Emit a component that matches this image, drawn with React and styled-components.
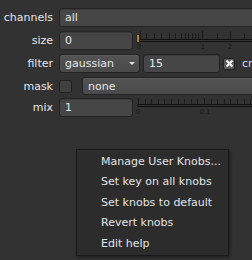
import React from 'react';
import styled, { createGlobalStyle } from 'styled-components';

const GlobalStyle = createGlobalStyle`
  html, body {
    margin: 0;
    padding: 0;
    background: #323232;
    overflow: hidden;
  }
  body {
    font-family: "DejaVu Sans", Verdana, sans-serif;
    font-size: 11px;
    color: #e2e2e2;
  }
`;

const Page = styled.div`
  position: relative;
  width: 252px;
  height: 260px;
  overflow: hidden;
`;

const Panel = styled.div`
  display: flex;
  flex-direction: column;
  gap: 4px;
  padding-top: 8px;
`;

const Row = styled.div`
  display: grid;
  grid-template-columns: 53px 1fr;
  column-gap: 6px;
  align-items: center;
  height: ${(p) => p.h || 19}px;
`;

const Label = styled.div`
  text-align: right;
  color: #e4e6ea;
  white-space: nowrap;
`;

const Controls = styled.div`
  display: flex;
  align-items: center;
  gap: ${(p) => p.gap || 2}px;
  height: 100%;
  min-width: 0;
`;

const Field = styled.div`
  box-sizing: border-box;
  flex: none;
  width: ${(p) => p.w}px;
  height: ${(p) => p.h || 19}px;
  display: flex;
  align-items: center;
  padding-left: 5px;
  background: #464646;
  border: 1px solid #232323;
  border-radius: 3px;
  box-shadow: inset 0 1px 0 #3a3a3a;
  color: #e8e8e8;
  white-space: nowrap;
`;

const Dropdown = styled(Field)`
  position: relative;
  background: linear-gradient(#535353, #4a4a4a);
  box-shadow: inset 0 1px 0 #5c5c5c;
  justify-content: space-between;
  padding-right: 4px;
`;

const Arrow = styled.span`
  width: 0;
  height: 0;
  border-left: 3px solid transparent;
  border-right: 3px solid transparent;
  border-top: 3px solid #e0e0e0;
`;

const Check = styled.div`
  box-sizing: border-box;
  flex: none;
  width: ${(p) => p.size || 13}px;
  height: ${(p) => p.size || 13}px;
  background: ${(p) => (p.checked ? '#5a5a5a' : '#404040')};
  border: 1px solid #222;
  border-radius: 2px;
  display: flex;
  align-items: center;
  justify-content: center;
`;

const CheckText = styled.span`
  color: #c6dcf0;
  margin-left: 4px;
  white-space: nowrap;
`;

const Menu = styled.div`
  position: absolute;
  left: 76px;
  top: 149px;
  width: 153px;
  box-sizing: border-box;
  padding: 2px 0 1px;
  background: #2c2c2c;
  border: 1px solid #1b1b1b;
  box-shadow: 1px 1px 3px rgba(0, 0, 0, 0.45);
`;

const MenuItem = styled.div`
  height: 20.4px;
  line-height: 20.4px;
  padding-left: 24px;
  color: #e2e4e8;
  white-space: nowrap;
`;

const Ruler = ({ ticks, majors, labels, handle, lineY, tickTop, labelY }) => (
  <svg width="119" height="19" style={{ flex: 'none', display: 'block' }}>
    {ticks.map((x) => (
      <line
        key={x}
        x1={x - 132.5}
        x2={x - 132.5}
        y1={majors.includes(x) ? tickTop - 2 : tickTop}
        y2={lineY}
        stroke="#1c1c1c"
        strokeWidth="1"
      />
    ))}
    <line x1="3" x2="119" y1={lineY + 0.5} y2={lineY + 0.5} stroke="#111" />
    <line x1="3" x2="119" y1={lineY + 2.5} y2={lineY + 2.5} stroke="#111" />
    {labels.map(([x, t]) => (
      <text
        key={t}
        x={x - 133}
        y={labelY}
        fontSize="7"
        fill="#1a1a1a"
        textAnchor="middle"
        fontFamily="DejaVu Sans, sans-serif"
      >
        {t}
      </text>
    ))}
    {handle && (
      <rect x="2.5" y="3.5" width="3" height="8" fill="#a38a3c" stroke="#2a2410" />
    )}
  </svg>
);

const sizeTicks = [139, 145, 153, 160, 168, 174, 180, 184, 187, 191, 194, 197, 201, 216, 229, 243];
const mixTicks = Array.from({ length: 18 }, (_, i) => Math.round(137 + i * 6.6));

const menuItems = [
  'Manage User Knobs...',
  'Set key on all knobs',
  'Set knobs to default',
  'Revert knobs',
  'Edit help',
];

const XMark = () => (
  <svg width="9" height="9" viewBox="0 0 9 9">
    <path d="M1.5 1.5 L7.5 7.5 M7.5 1.5 L1.5 7.5" stroke="#f2f2f2" strokeWidth="2.2" />
  </svg>
);

export default function App() {
  return (
    <Page>
      <GlobalStyle />
      <Panel>
        <Row>
          <Label>channels</Label>
          <Controls>
            <Field w={220}>all</Field>
          </Controls>
        </Row>
        <Row>
          <Label>size</Label>
          <Controls gap={1}>
            <Field w={74}>0</Field>
            <Ruler
              ticks={sizeTicks}
              majors={[139, 201, 229]}
              labels={[[138, '0'], [202, '1'], [229, '2']]}
              handle
              lineY={8}
              tickTop={2}
              labelY={18}
            />
          </Controls>
        </Row>
        <Row>
          <Label>filter</Label>
          <Controls gap={3}>
            <Dropdown w={81}>
              gaussian
              <Arrow />
            </Dropdown>
            <Field w={77}>15</Field>
            <Check checked size={12}>
              <XMark />
            </Check>
            <CheckText>crop</CheckText>
          </Controls>
        </Row>
        <Row h={17}>
          <Label>mask</Label>
          <Controls gap={10}>
            <Check />
            <Dropdown w={180} h={18}>
              none
            </Dropdown>
          </Controls>
        </Row>
        <Row>
          <Label>mix</Label>
          <Controls gap={1}>
            <Field w={74}>1</Field>
            <Ruler
              ticks={mixTicks}
              majors={[137, 203]}
              labels={[[137, '0'], [204, '0.1']]}
              lineY={6}
              tickTop={1}
              labelY={16}
            />
          </Controls>
        </Row>
      </Panel>
      <Menu>
        {menuItems.map((item) => (
          <MenuItem key={item}>{item}</MenuItem>
        ))}
      </Menu>
    </Page>
  );
}
